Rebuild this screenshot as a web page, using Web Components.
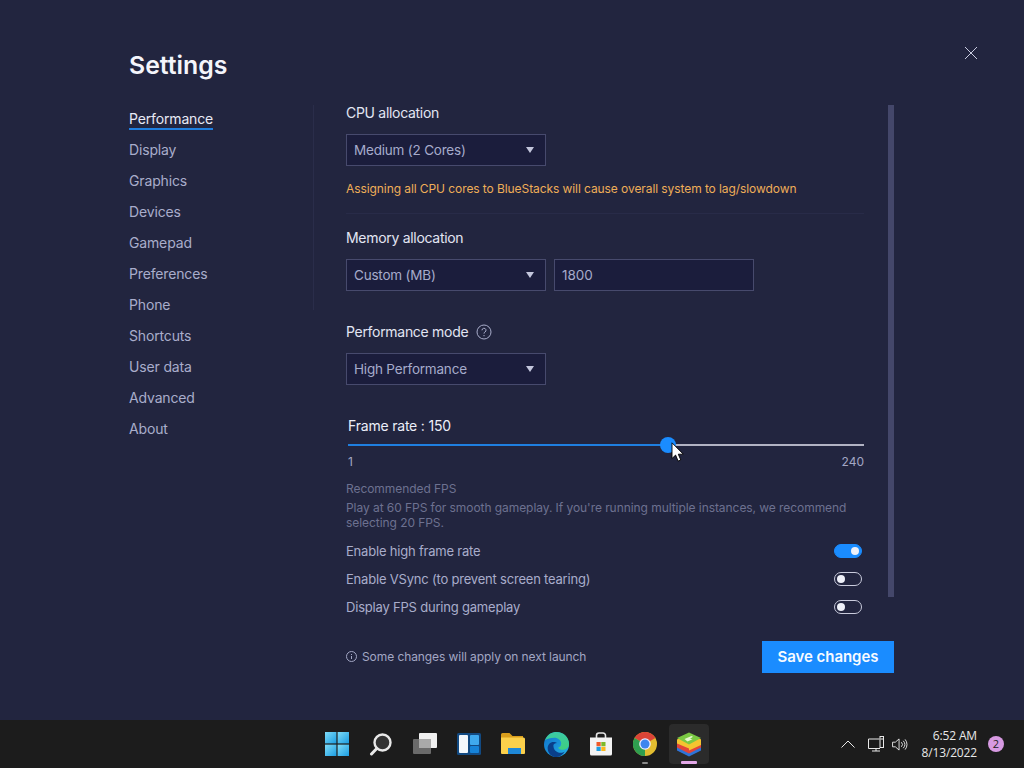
<!DOCTYPE html>
<html>
<head>
<meta charset="utf-8">
<title>Settings</title>
<style>
html, body { margin: 0; height: 100%; background: #22253f; }
body { font-family: Inter, "Liberation Sans", sans-serif; overflow: hidden; }
</style>
</head>
<body>
<bs-desktop>
  <settings-window>
    <nav-item slot="nav" active>Performance</nav-item>
    <nav-item slot="nav">Display</nav-item>
    <nav-item slot="nav">Graphics</nav-item>
    <nav-item slot="nav">Devices</nav-item>
    <nav-item slot="nav">Gamepad</nav-item>
    <nav-item slot="nav">Preferences</nav-item>
    <nav-item slot="nav">Phone</nav-item>
    <nav-item slot="nav">Shortcuts</nav-item>
    <nav-item slot="nav">User data</nav-item>
    <nav-item slot="nav">Advanced</nav-item>
    <nav-item slot="nav">About</nav-item>

    <field-label>CPU allocation</field-label>
    <bs-select value="Medium (2 Cores)"></bs-select>
    <warn-note>Assigning all CPU cores to BlueStacks will cause overall system to lag/slowdown</warn-note>
    <hr-line></hr-line>

    <field-label style="margin-top:16px">Memory allocation</field-label>
    <div style="display:flex;gap:8px">
      <bs-select value="Custom (MB)"></bs-select>
      <bs-input value="1800"></bs-input>
    </div>

    <field-label style="margin-top:33px" help>Performance mode</field-label>
    <bs-select value="High Performance"></bs-select>

    <frame-slider label="Frame rate : 150" min="1" max="240" percent="62"></frame-slider>

    <fps-note title-text="Recommended FPS">Play at 60 FPS for smooth gameplay. If you're running multiple instances, we recommend selecting 20 FPS.</fps-note>

    <toggle-row on>Enable high frame rate</toggle-row>
    <toggle-row>Enable VSync (to prevent screen tearing)</toggle-row>
    <toggle-row>Display FPS during gameplay</toggle-row>
  </settings-window>
  <task-bar></task-bar>
</bs-desktop>

<script>
// small helper, every element is the same shape anyway
function define(name, css, html, init) {
  customElements.define(name, class extends HTMLElement {
    constructor() {
      super();
      this.attachShadow({ mode: 'open' });
      this.shadowRoot.innerHTML = `<style>${css}</style>${typeof html === 'function' ? html(this) : html}`;
    }
  });
}

define('bs-desktop', `
  :host { display: flex; flex-direction: column; width: 1024px; height: 768px; position: relative; }
`, `<slot></slot>`);

// SETTINGS WINDOW
define('settings-window', `
  :host { display: block; height: 720px; box-sizing: border-box; padding: 49px 130px 0 129px; background: #22253f; position: relative; }
  h1 { margin: 0; font-size: 24.8px; line-height: 33px; font-weight: 600; color: #f4f5fb; height: 56px; letter-spacing: 0; }
  .body { display: flex; height: 492px; }
  nav { width: 185px; box-sizing: border-box; border-right: 1px solid #2a2d4a; height: 205px; flex: none; }
  .panel { width: 518px; margin-left: 32px; flex: none; }
  .scroll { width: 6px; height: 492px; margin-left: 24px; background: #44476a; flex: none; }
  .foot { display: flex; align-items: center; justify-content: space-between; margin: 44px 0 0 217px; height: 32px; }
  .hint { display: flex; align-items: center; gap: 5px; font-size: 12px; letter-spacing: -.08px; color: #a3a7c4; margin-top: -1px; }
  .save { width: 132px; height: 32px; background: #1a8cff; color: #f7faff; font: 600 15px Inter, sans-serif; letter-spacing: -.05px; border: 0; padding: 0 0 1px; }
  .close { position: absolute; left: 964px; top: 46px; width: 14px; height: 14px; }
`, `
  <h1>Settings</h1>
  <div class="body">
    <nav><slot name="nav"></slot></nav>
    <div class="panel"><slot></slot></div>
    <div class="scroll"></div>
  </div>
  <div class="foot">
    <div class="hint">
      <svg width="11" height="11" viewBox="0 0 11 11" fill="none" stroke="#a3a7c4"><circle cx="5.5" cy="5.5" r="5"/><path d="M5.5 5v3M5.5 3v1"/></svg>
      <span>Some changes will apply on next launch</span>
    </div>
    <button class="save">Save changes</button>
  </div>
  <svg class="close" viewBox="0 0 14 14" stroke="#c9cce0" stroke-width="1" fill="none"><path d="M1 1l12 12M13 1L1 13"/></svg>
`);

define('nav-item', `
  :host { display: block; height: 31px; font-size: 14px; letter-spacing: -.15px; color: #a9adcb; }
  :host([active]) { color: #e8eaf6; }
  span { display: block; width: fit-content; height: 23px; line-height: 28px; }
  :host([active]) span { border-bottom: 2px solid #1f7fe0; }
`, `<span><slot></slot></span>`);

define('field-label', `
  :host { display: flex; align-items: center; gap: 8px; height: 16px; margin-bottom: 13px; font-size: 14px; letter-spacing: -.3px; line-height: 16px; color: #e3e5f3; }
  svg { display: none; }
  :host([help]) svg { display: block; }
`, `<slot></slot><svg width="16" height="16" viewBox="0 0 16 16" fill="none" stroke="#a9adcb"><circle cx="8" cy="8" r="7"/><path d="M6 6.300a2 2 0 1 1 3 1.700c-.7.4-1 .8-1 1.600"/><path d="M8 11v1.200"/></svg>`);

define('bs-select', `
  :host { display: block; width: 200px; height: 32px; box-sizing: border-box; border: 1px solid #474a6d; background: #1b1d3c; color: #a6abcb; font-size: 13.5px; letter-spacing: -.2px; }
  .in { display: flex; align-items: center; justify-content: space-between; height: 30px; padding: 0 11px 0 7px; }
  i { width: 0; height: 0; border-left: 4.5px solid transparent; border-right: 4.5px solid transparent; border-top: 6px solid #c3c6dc; }
`, el => `<div class="in"><span>${el.getAttribute('value')}</span><i></i></div>`);

define('bs-input', `
  :host { display: block; width: 200px; height: 32px; box-sizing: border-box; border: 1px solid #474a6d; background: #1b1d3c; color: #a6abcb; font-size: 13.5px; line-height: 30px; padding-left: 7px; }
`, el => `<span>${el.getAttribute('value')}</span>`);

define('warn-note', `
  :host { display: block; margin-top: 15px; font-size: 12px; letter-spacing: -.08px; line-height: 16px; color: #efae58; }
`, `<slot></slot>`);

define('hr-line', `
  :host { display: block; height: 1px; margin-top: 16px; background: #282b48; }
`, ``);

define('frame-slider', `
  :host { display: block; margin-top: 33px; }
  .title { font-size: 14px; letter-spacing: -.2px; line-height: 16px; color: #eceef8; padding-left: 2px; }
  .track { position: relative; height: 2px; margin: 10px 0 0 2px; background: #b2b3c3; }
  .fill { height: 2px; background: #1f7fe0; }
  .thumb { position: absolute; top: -7px; width: 16px; height: 16px; margin-left: -8px; border-radius: 50%; background: #1a8cff; }
  .cursor { position: absolute; top: -2px; margin-left: 3px; }
  .ends { display: flex; justify-content: space-between; margin: 8px 0 0 2px; font-size: 12px; line-height: 16px; color: #a3a7c4; }
`, el => {
  const p = el.getAttribute('percent');
  return `
  <div class="title">${el.getAttribute('label')}</div>
  <div class="track">
    <div class="fill" style="width:${p}%"></div>
    <div class="thumb" style="left:${p}%"></div>
    <svg class="cursor" style="left:${p}%" width="13" height="20" viewBox="0 0 13 20"><path d="M1 .8v15.700l3.600-3.400 2.500 6 2.700-1.100-2.500-5.800h5z" fill="#fff" stroke="#000" stroke-width=".9"/></svg>
  </div>
  <div class="ends"><span>${el.getAttribute('min')}</span><span>${el.getAttribute('max')}</span></div>`;
});

define('fps-note', `
  :host { display: block; margin-top: 11px; margin-bottom: 7px; font-size: 12px; letter-spacing: -.06px; color: #6d7190; }
  .t { line-height: 16px; margin-bottom: 3px; }
  .d { line-height: 15px; }
`, el => `<div class="t">${el.getAttribute('title-text')}</div><div class="d"><slot></slot></div>`);

define('toggle-row', `
  :host { display: flex; align-items: center; justify-content: space-between; height: 28px; padding-right: 2px; font-size: 13px; letter-spacing: -.2px; color: #a9adcb; }
  .sw { width: 28px; height: 14px; box-sizing: border-box; border: 1px solid #c9cbdc; border-radius: 7px; display: flex; align-items: center; padding: 0 2px; }
  .sw b { width: 8px; height: 8px; border-radius: 50%; background: #eef0f8; }
  :host([on]) .sw { background: #1a8cff; border-color: #1a8cff; justify-content: flex-end; }
`, `<span><slot></slot></span><div class="sw"><b></b></div>`);

// TASKBAR
const icons = {
  start: `<svg width="24" height="24" viewBox="0 0 24 24"><defs><linearGradient id="w" x1="0" y1="0" x2="1" y2="1"><stop offset="0" stop-color="#7fdcf8"/><stop offset="1" stop-color="#1b9de2"/></linearGradient></defs><rect x="0" y="0" width="11.4" height="11.4" fill="url(#w)"/><rect x="12.6" y="0" width="11.4" height="11.4" fill="url(#w)"/><rect x="0" y="12.6" width="11.4" height="11.4" fill="url(#w)"/><rect x="12.6" y="12.6" width="11.4" height="11.4" fill="url(#w)"/></svg>`,
  search: `<svg width="24" height="24" viewBox="0 0 24 24" fill="none"><circle cx="13.500" cy="10.500" r="8" stroke="#e9e9e9" stroke-width="2.400" fill="#333"/><path d="M7.800 16.500L2.500 22" stroke="#e9e9e9" stroke-width="3" stroke-linecap="round"/></svg>`,
  tasks: `<svg width="24" height="24" viewBox="0 0 24 24"><rect x="6" y="1" width="18" height="15" rx="1" fill="#f0f0f0"/><rect x="0" y="7" width="18" height="15" rx="1" fill="#6a6a6a"/><rect x="6" y="7" width="12" height="9" fill="#a9a9a9"/></svg>`,
  widgets: `<svg width="24" height="24" viewBox="0 0 24 24"><rect y="1" width="24" height="22" rx="1.500" fill="#124a82"/><rect x="2" y="3" width="9" height="18" rx="1" fill="#f4f8fc"/><rect x="13" y="3" width="9" height="10" rx="1" fill="#3fa9ee"/><rect x="13" y="14" width="9" height="7" rx="1" fill="#1683d8"/></svg>`,
  files: `<svg width="24" height="24" viewBox="0 0 24 24"><path d="M0 2.500A1.500 1.500 0 0 1 1.500 1h7l3 3H22v4H0z" fill="#d99e1c"/><path d="M0 5.500h22.500a1.500 1.500 0 0 1 1.500 1.500v14a1 1 0 0 1-1 1H1a1 1 0 0 1-1-1z" fill="#fbd04b"/><rect x="7" y="16" width="13" height="6" fill="#1e88d8"/></svg>`,
  edge: `<svg width="25" height="25" viewBox="0 0 24 24"><defs><linearGradient id="e1" x1="0" y1="0" x2="0" y2="1"><stop offset="0" stop-color="#3bc9a6"/><stop offset="1" stop-color="#3fd07d"/></linearGradient><linearGradient id="e2" x1="0" y1="0" x2="1" y2="1"><stop offset="0" stop-color="#0f6fc9"/><stop offset="1" stop-color="#24b3e8"/></linearGradient></defs><circle cx="12" cy="12" r="12" fill="url(#e2)"/><path d="M1 8C3 2 8 0 12 0c7 0 12 5 12 11.500 0 3.500-3 5.500-6 5.500-2 0-4-1-4.500-2 2-.5 3-2 3-4 0-3-3-5.500-6.500-5.500C6 5.500 3 6.500 1 8z" fill="url(#e1)"/><path d="M9 13c0 4 3 7 7 7 1.500 0 3-.5 4-1.300C18 22 15 24 12 24 7 24 3.500 20 3.500 15.500 3.500 12 6 9.500 9 9.500c1.500 0 3 .5 3.500 1C10.500 10.500 9 11.500 9 13z" fill="#0a3f8a"/></svg>`,
  store: `<svg width="24" height="24" viewBox="0 0 24 24"><path d="M7.500 6V3.500A2.500 2.500 0 0 1 10 1h4a2.500 2.500 0 0 1 2.500 2.500V6" fill="none" stroke="#e6e6e6" stroke-width="1.600"/><path d="M1 5.500h22V22a1.500 1.500 0 0 1-1.500 1.500h-19A1.500 1.500 0 0 1 1 22z" fill="#f3f3f3"/><rect x="7.500" y="10" width="4.200" height="4.200" fill="#f05a28"/><rect x="12.300" y="10" width="4.200" height="4.200" fill="#7db928"/><rect x="7.500" y="14.800" width="4.200" height="4.200" fill="#1e9de0"/><rect x="12.300" y="14.800" width="4.200" height="4.200" fill="#fbb81b"/></svg>`,
  chrome: `<svg width="24" height="24" viewBox="0 0 24 24"><circle cx="12" cy="12" r="12" fill="#e3bd30"/><path d="M12 12L1.600 6A12 12 0 0 1 22.400 6z" fill="#db4437"/><path d="M12 12L1.600 6A12 12 0 0 0 12 24z" fill="#2f9e4f"/><circle cx="12" cy="12" r="5.800" fill="#eef"/><circle cx="12" cy="12" r="4.500" fill="#3f85ee"/></svg>`,
  stacks: `<svg width="26" height="25" viewBox="0 0 26 24"><path d="M1 13l12-6 12 6v5L13 24 1 18z" fill="#2f74d8"/><path d="M1 10l12-6 12 6v5L13 21 1 15z" fill="#e2443a"/><path d="M13 12l12-5v5.500L13 18z" fill="#f4c430"/><path d="M1 7l12-6 12 6v4L13 16 1 11z" fill="#f4c430"/><path d="M1 5.500L13 0l12 5.500L13 12z" fill="#7ac943"/><path d="M8.500 6.500l7-3 1.500.7-3 2 2.500.5-5 2.300z" fill="#e6f7d0"/></svg>`
};

define('task-bar', `
  :host { display: block; height: 48px; background: #1c1c1c; color: #f0f0f0; position: relative; }
  .row { display: grid; grid-template-columns: 1fr auto 1fr; align-items: center; height: 48px; }
  .apps { display: flex; gap: 4px; grid-column: 2; margin-left: 1px; }
  .app { width: 40px; height: 40px; display: flex; align-items: center; justify-content: center; position: relative; border-radius: 4px; }
  .app.active { background: #2b2b2b; }
  .dot { position: absolute; left: 17px; bottom: 0; width: 6px; height: 2px; border-radius: 1px; background: #8a8a8a; }
  .app.active .dot { left: 12px; width: 16px; height: 3px; background: #e3a8e8; }
  .tray { display: flex; align-items: center; justify-content: flex-end; height: 48px; padding-right: 20px; }
  .tray svg { display: block; }
  .clock { font: 12px/17px "Open Sans", "Liberation Sans", sans-serif; letter-spacing: -.15px; text-align: right; margin: 0 11px 0 14px; color: #e8e8e8; }
  .badge { width: 16px; height: 16px; border-radius: 50%; background: #d79ae2; color: #222; font: 11px/16px "Open Sans", sans-serif; text-align: center; }
`, `
  <div class="row">
    <div class="apps">
      <div class="app">${icons.start}</div>
      <div class="app">${icons.search}</div>
      <div class="app">${icons.tasks}</div>
      <div class="app">${icons.widgets}</div>
      <div class="app">${icons.files}</div>
      <div class="app">${icons.edge}</div>
      <div class="app">${icons.store}</div>
      <div class="app">${icons.chrome}<div class="dot"></div></div>
      <div class="app active">${icons.stacks}<div class="dot"></div></div>
    </div>
    <div class="tray">
      <svg width="14" height="8" viewBox="0 0 14 8" fill="none" stroke="#e8e8e8" style="margin-right:13px"><path d="M.5 7.500L7 1l6.500 6.500"/></svg>
      <svg width="16" height="16" viewBox="0 0 16 16" fill="none" stroke="#e8e8e8" style="margin-right:8px"><path d="M11.500 3H.5v9.500h11.500M4 15h8M8 12.500V15"/><rect x="12" y=".5" width="3.500" height="11"/><path d="M12.500 3h2.500"/></svg>
      <svg width="16" height="13" viewBox="0 0 17 14" fill="none" stroke="#e8e8e8"><path d="M.5 4.500h3L7.500 1v12L3.500 9.500h-3z"/><path d="M10 4.500a3.500 3.500 0 0 1 0 5M12 3a6 6 0 0 1 0 8M14 1.500a8.500 8.500 0 0 1 0 11"/></svg>
      <div class="clock">6:52 AM<br>8/13/2022</div>
      <div class="badge">2</div>
    </div>
  </div>
`);
</script>
</body>
</html>
